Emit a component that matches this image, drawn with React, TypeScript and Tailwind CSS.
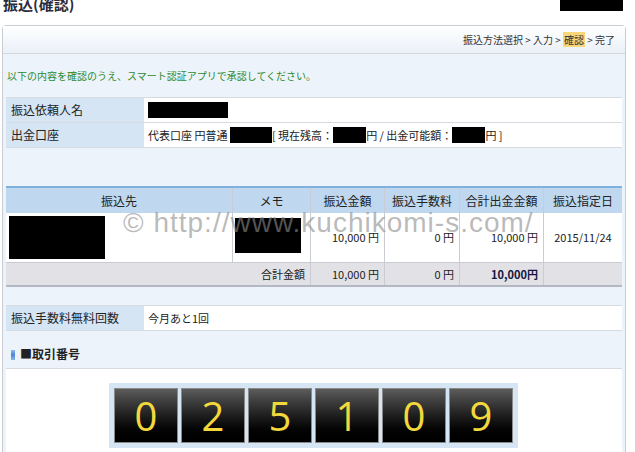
import React from 'react';

const jp = { fontFamily: '"Noto Sans CJK JP", "Noto Sans", sans-serif' };

const Redact: React.FC<{ className?: string }> = ({ className = '' }) => (
  <span className={`inline-block bg-black align-middle ${className}`} />
);

const InfoRow: React.FC<{ label: string; children: React.ReactNode }> = ({ label, children }) => (
  <div className="flex h-[25px] border-b border-[#d6dbe2]">
    <div className="w-[138px] shrink-0 bg-[#d6e5f4] pl-[5px] flex items-center text-[12px] text-[#222]">{label}</div>
    <div className="flex-1 bg-white pl-[4px] flex items-center text-[11px] text-[#222]">{children}</div>
  </div>
);

const digits = ['0', '2', '5', '1', '0', '9'];

const App: React.FC = () => {
  return (
    <div className="w-[635px] h-[452px] overflow-hidden bg-white relative" style={jp}>
      {/* page title */}
      <div className="h-[25px] flex items-start justify-between pl-[3px] pr-[12px]">
        <h1 className="text-[15px] font-bold text-[#2b2b3a] leading-none -mt-[4px]">振込(確認)</h1>
        <Redact className="w-[63px] h-[11px]" />
      </div>

      {/* main panel */}
      <div className="ml-[2px] w-[624px] border border-[#c9cdd3] rounded-t-[4px] bg-[#edf3fb]">
        <div className="h-[28px] bg-gradient-to-b from-white to-[#eaf0f8] border-b border-[#d3d8de] flex items-center justify-end pr-[10px] text-[10px] text-[#333]">
          振込方法選択 &gt; 入力 &gt;&nbsp;<span className="bg-[#f8d67a] px-[1px]">確認</span>&nbsp;&gt; 完了
        </div>

        <div className="h-[43px] flex items-center pl-[4px] text-[10px] text-[#2b8a2b]">
          以下の内容を確認のうえ、スマート認証アプリで承認してください。
        </div>

        <div className="px-[3px]">
          <div className="border-t border-[#d6dbe2]">
            <InfoRow label="振込依頼人名">
              <Redact className="w-[80px] h-[16px]" />
            </InfoRow>
            <InfoRow label="出金口座">
              <span>代表口座 円普通&nbsp;</span>
              <Redact className="w-[42px] h-[16px]" />
              <span>[ 現在残高：</span>
              <Redact className="w-[33px] h-[16px]" />
              <span>円 / 出金可能額：</span>
              <Redact className="w-[33px] h-[16px]" />
              <span>円 ]</span>
            </InfoRow>
          </div>

          <div className="h-[38px]" />

          {/* transfer table */}
          <div className="border-t-[2px] border-[#7fb0de] border-b-[2px] border-b-[#b4b8c2] text-[11px] text-[#222]">
            <div className="flex h-[25px] bg-[#bfd8ef] text-[12px]">
              <div className="w-[227px] border-r border-[#c9ccd2] flex items-center justify-center">振込先</div>
              <div className="w-[78px] border-r border-[#c9ccd2] flex items-center justify-center">メモ</div>
              <div className="w-[74px] border-r border-[#c9ccd2] flex items-center justify-center">振込金額</div>
              <div className="w-[75px] border-r border-[#c9ccd2] flex items-center justify-center">振込手数料</div>
              <div className="w-[84px] border-r border-[#c9ccd2] flex items-center justify-center">合計出金金額</div>
              <div className="flex-1 flex items-center justify-center">振込指定日</div>
            </div>
            <div className="flex h-[50px] bg-white border-b border-[#c9ccd2]">
              <div className="w-[227px] border-r border-[#c9ccd2] pl-[3px] pt-[3px]">
                <Redact className="w-[96px] h-[43px] align-top" />
              </div>
              <div className="w-[78px] border-r border-[#c9ccd2] pl-[2px] pt-[5px]">
                <Redact className="w-[66px] h-[35px] align-top" />
              </div>
              <div className="w-[74px] border-r border-[#c9ccd2] flex items-center justify-end pr-[5px]">10,000 円</div>
              <div className="w-[75px] border-r border-[#c9ccd2] flex items-center justify-end pr-[5px]">0 円</div>
              <div className="w-[84px] border-r border-[#c9ccd2] flex items-center justify-end pr-[5px]">10,000 円</div>
              <div className="flex-1 flex items-center justify-center text-[11px]">2015/11/24</div>
            </div>
            <div className="flex h-[22px] bg-[#e1e1e6]">
              <div className="w-[305px] border-r border-[#c9ccd2] flex items-center justify-end pr-[5px]">合計金額</div>
              <div className="w-[74px] border-r border-[#c9ccd2] flex items-center justify-end pr-[5px]">10,000 円</div>
              <div className="w-[75px] border-r border-[#c9ccd2] flex items-center justify-end pr-[5px]">0 円</div>
              <div className="w-[84px] border-r border-[#c9ccd2] flex items-center justify-end pr-[5px] font-bold text-[#141440]">10,000円</div>
              <div className="flex-1" />
            </div>
          </div>

          <div className="h-[18px]" />

          <div className="border-t border-[#d6dbe2]">
            <InfoRow label="振込手数料無料回数">今月あと1回</InfoRow>
          </div>

          {/* section heading */}
          <div className="h-[38px] flex items-end pb-[8px] pl-[5px] border-b border-[#d6dbe2]">
            <span className="w-[4px] h-[10px] mr-[5px] bg-gradient-to-b from-[#8fb8ea] via-[#4c86d6] to-[#8fb8ea]" />
            <span className="text-[12px] font-bold text-[#222] leading-none">■取引番号</span>
          </div>

          {/* transaction number */}
          <div className="bg-white h-[90px] pt-[14px] pl-[103px]">
            <div className="inline-flex gap-[3px] bg-[#d6e5f4] p-[5px]">
              {digits.map((d, i) => (
                <div
                  key={i}
                  className="w-[64px] h-[55px] border border-[#8a8a8a] bg-gradient-to-b from-[#5c5c5c] to-[#000] flex items-center justify-center text-[40px] text-[#f3d83c] leading-none"
                  style={{ fontFamily: '"Open Sans", sans-serif' }}
                >
                  {d}
                </div>
              ))}
            </div>
          </div>
        </div>
      </div>

      {/* watermark */}
      <div
        className="absolute left-[123px] top-[202px] text-[28px] tracking-[1px] text-[#8c8c8c]/60 whitespace-nowrap pointer-events-none"
        style={{ fontFamily: '"Liberation Sans", Arial, sans-serif' }}
      >
        © http://www.kuchikomi-s.com/
      </div>
    </div>
  );
};

export default App;
